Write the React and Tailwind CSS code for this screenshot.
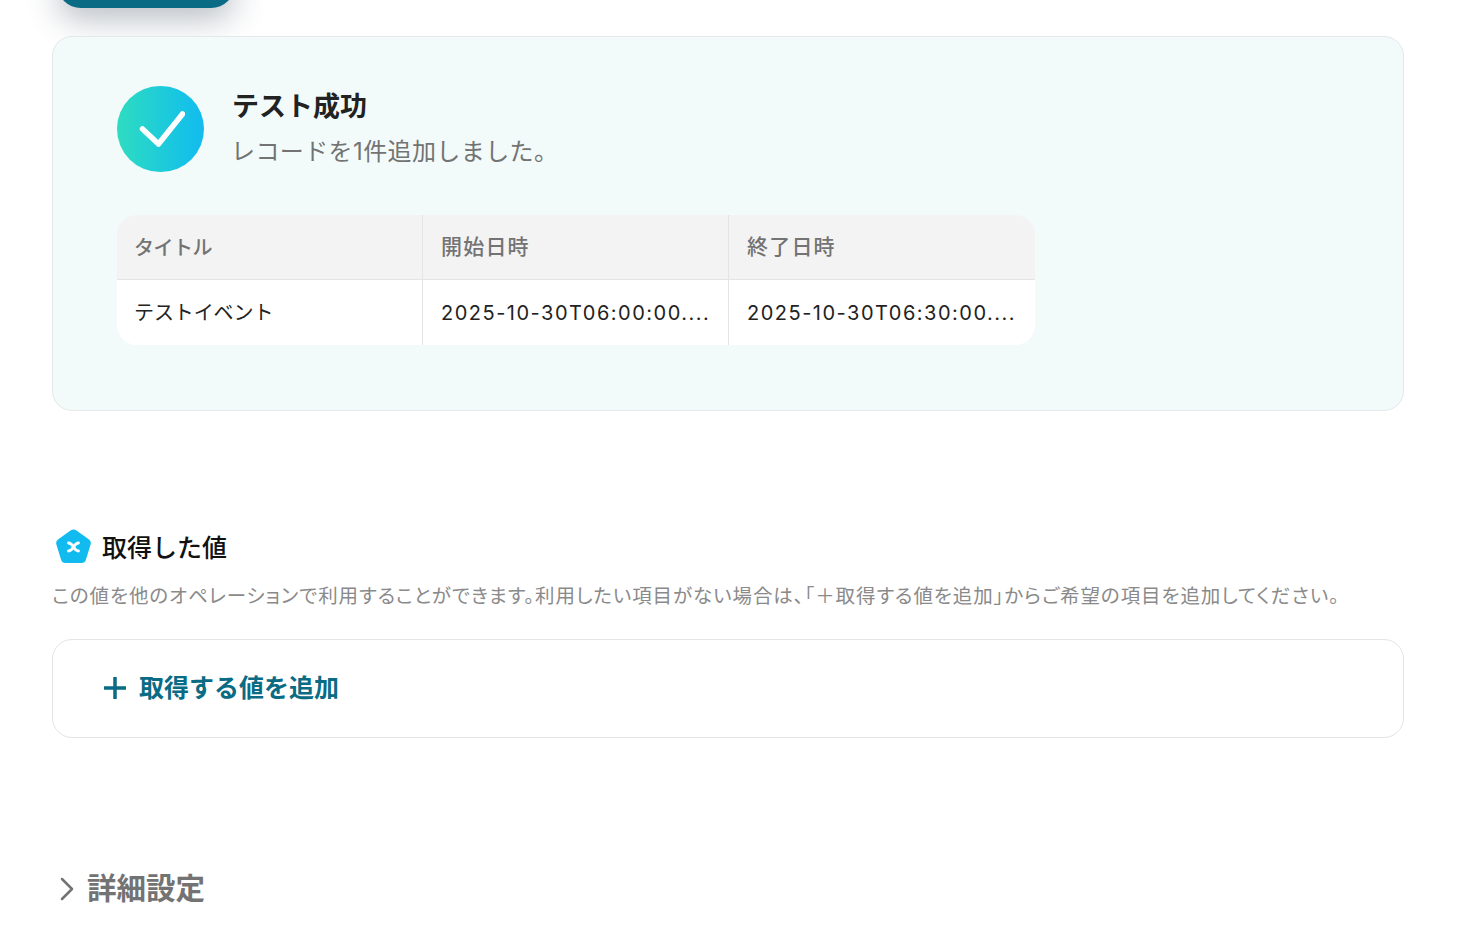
import React from 'react';

const Cell = ({ children, head, last, textClass }) => (
  <div
    className={`w-[306px] flex items-center px-[18px] ${head ? 'h-[64px] bg-[#f3f3f3] text-[#737373] font-medium' : 'h-[65px] bg-white text-[#222222]'} ${last ? '' : 'border-r border-[#e4e4e4]'}`}
  >
    <span className={`whitespace-nowrap ${textClass}`}>{children}</span>
  </div>
);

const App = () => {
  return (
    <div className="h-[946px] w-[1462px] overflow-hidden bg-white pl-[52px] pr-[58px] font-['Inter','Noto_Sans_CJK_JP',sans-serif]">
      <div className="-mt-[40px] ml-[5px] h-[48px] w-[178px] rounded-[24px] bg-[#0a6b84] shadow-[0_12px_32px_rgba(30,50,70,0.3)]" />

      {/* result box */}
      <div className="mt-[28px] h-[375px] rounded-[20px] border border-[#e4e8e8] bg-[#f2fbfa] px-[64px] pt-[49px]">
        <div className="flex items-center gap-[29px]">
          <div className="flex h-[86px] w-[87px] items-center justify-center rounded-full bg-gradient-to-r from-[#2fdcc0] to-[#12bbef]">
            <svg width="46" height="38" viewBox="0 0 46 38" fill="none" className="ml-[2px]">
              <path d="M3.5 19 L19.5 34 L43.5 4" stroke="#fff" strokeWidth="5.5" strokeLinecap="round" strokeLinejoin="round" />
            </svg>
          </div>
          <div className="-ml-[1px]">
            <div className="-mt-[2px] text-[27px] leading-[40px] font-bold text-[#222222]">テスト成功</div>
            <div className="mt-[7px] -ml-[1px] text-[24px] leading-[36px] tracking-[0.4px] text-[#737373]">レコードを1件追加しました。</div>
          </div>
        </div>

        <div className="mt-[43px] w-[918px] overflow-hidden rounded-[20px]">
          <div className="flex border-b border-[#e4e4e4]">
            <Cell head textClass="pt-[2px] -ml-[1px] text-[20px] -tracking-[0.5px]">タイトル</Cell>
            <Cell head textClass="text-[21px] tracking-[1.2px]">開始日時</Cell>
            <Cell head last textClass="text-[21px] tracking-[1.2px]">終了日時</Cell>
          </div>
          <div className="flex">
            <Cell textClass="-ml-[1px] text-[20px] -tracking-[0.1px]">テストイベント</Cell>
            <Cell textClass="text-[20px] tracking-[1.5px]">2025-10-30T06:00:00....</Cell>
            <Cell last textClass="text-[20px] tracking-[1.5px]">2025-10-30T06:30:00....</Cell>
          </div>
        </div>
      </div>

      {/* values */}
      <div className="mt-[117px] flex items-center gap-[10px] pl-[3px]">
        <svg width="37" height="36" viewBox="0 0 37 36">
          <path d="M15.5 1.5 Q18.5 -0.5 21.5 1.5 L34 10.5 Q36.5 12.5 35.6 15.5 L31 30.5 Q30 34 26.5 34 L10.5 34 Q7 34 6 30.5 L1.4 15.5 Q0.5 12.5 3 10.5 Z" fill="#12bbef" />
          <path d="M13.5 14 Q16 14 18.5 18 Q21 22 23.5 22 M23.5 14 Q21 14 18.5 18 Q16 22 13.5 22" stroke="#fff" strokeWidth="2.8" fill="none" strokeLinecap="round" />
        </svg>
        <span className="pt-[2px] text-[25px] leading-[36px] font-medium text-[#111111]">取得した値</span>
      </div>
      <p className="mt-[16px] whitespace-nowrap text-[19.5px] leading-[28px] text-[#8a8a8a] [font-feature-settings:'palt'] tracking-[0.93px]">
        この値を他のオペレーションで利用することができます。利用したい項目がない場合は、「＋取得する値を追加」からご希望の項目を追加してください。
      </p>

      <div className="mt-[29px] flex h-[99px] items-center gap-[12px] rounded-[20px] border border-[#e4e4e4] bg-white pl-[50px]">
        <svg width="24" height="24" viewBox="0 0 24 24" fill="none" className="-mt-[1px]">
          <path d="M12 1 V23 M1 12 H23" stroke="#0a6b84" strokeWidth="3.5" />
        </svg>
        <span className="text-[25px] font-bold text-[#0a6b84]">取得する値を追加</span>
      </div>

      <div className="mt-[130px] flex items-center gap-[13px] pl-[8px]">
        <svg width="14" height="24" viewBox="0 0 14 24" fill="none" className="mt-[1px]">
          <path d="M2 2 L12 12 L2 22" stroke="#737373" strokeWidth="2.5" strokeLinecap="round" strokeLinejoin="round" />
        </svg>
        <span className="text-[29.5px] leading-[40px] font-bold text-[#737373]">詳細設定</span>
      </div>
    </div>
  );
};

export default App;
